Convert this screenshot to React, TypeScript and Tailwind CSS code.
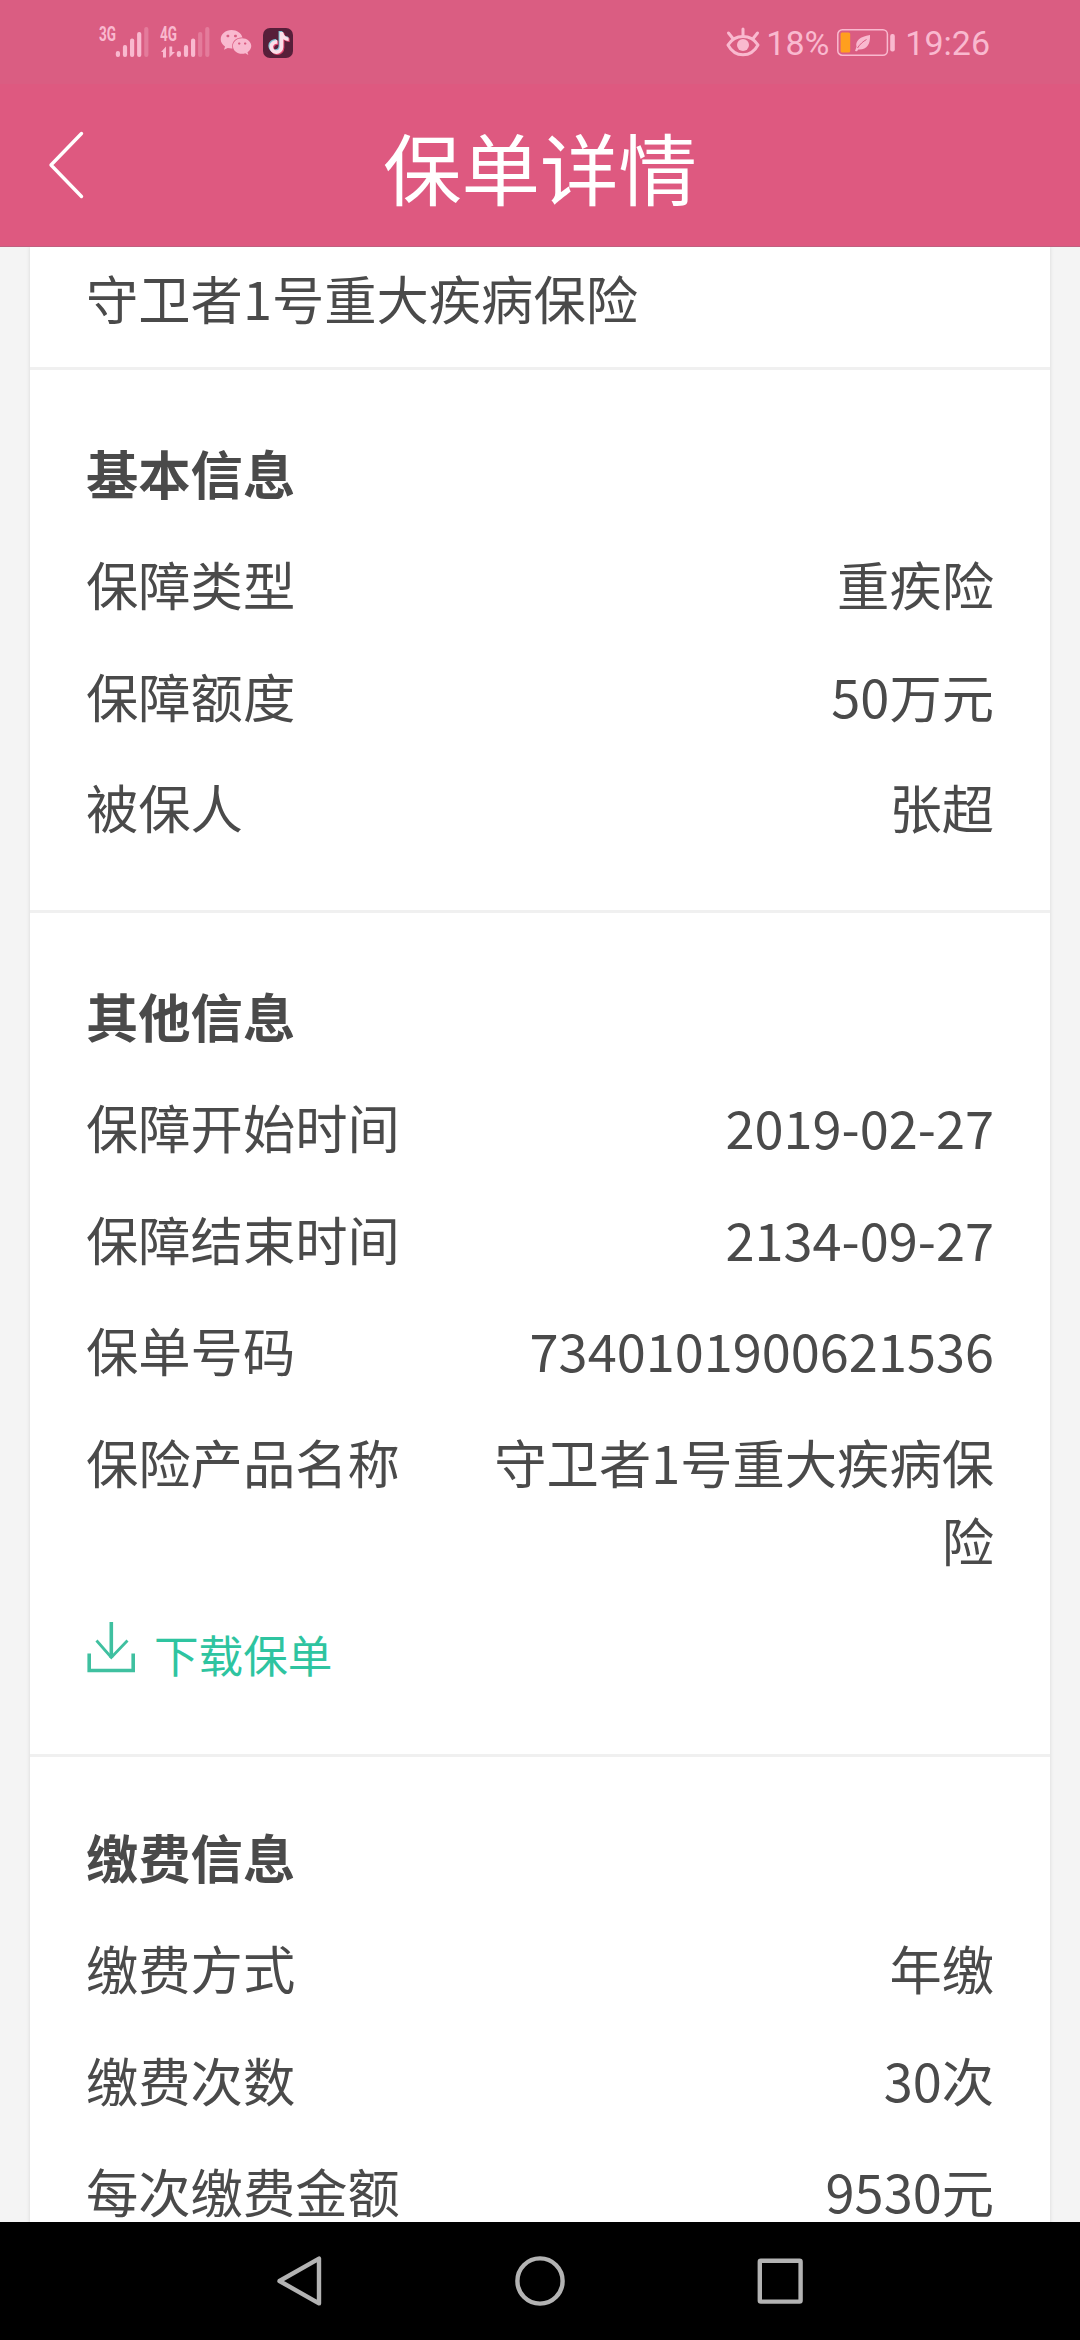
import React from "react";
import { FaWeixin, FaTiktok } from "react-icons/fa";

const BAR_TOPS = [51, 45, 38.5, 32, 27];

function Signal({ label, lit, data }: { label: string; lit: number; data?: boolean }) {
  return (
    <svg width="52" height="36" viewBox="0 0 52 36" className="shrink-0" fill="#f9b9cf">
      <text
        x="0"
        y="16.5"
        fontFamily="Roboto, sans-serif"
        fontWeight="700"
        fontSize="19.5"
        textLength="17"
        lengthAdjust="spacingAndGlyphs"
      >
        {label}
      </text>
      {data && (
        <g>
          <path d="M1 28 L6 22.5 V33.5 H3 V28 Z" />
          <path d="M15 28 L9.4 33.5 V22.5 H12.2 V28 Z" />
        </g>
      )}
      {BAR_TOPS.map((top, i) => (
        <rect
          key={top}
          x={16.8 + i * 7.1}
          y={top - 24}
          width="4.2"
          height={57 - top}
          rx="2"
          opacity={i < lit ? 1 : 0.33}
        />
      ))}
    </svg>
  );
}

function StatusBar() {
  return (
    <div className="flex h-[84px] shrink-0 items-start bg-[#da5d82] pt-6 pr-[91px] pl-[99px] text-[#f9b9cf]">
      <Signal label="3G" lit={4} />
      <div className="ml-[9px]">
        <Signal label="4G" lit={3} data />
      </div>
      <FaWeixin className="mt-[1px] ml-2 h-[35px] w-[32px] shrink-0" />
      <div className="relative mt-1 ml-[11px] h-[30px] w-[30px] shrink-0 rounded-[7px] bg-[#571f3a]">
        <FaTiktok className="absolute top-[3px] left-[4px] h-[22px] w-[22px] text-[#7fc3d3]" />
        <FaTiktok className="absolute top-[5px] left-[6px] h-[22px] w-[22px] text-[#e2476f]" />
        <FaTiktok className="absolute top-[4px] left-[5px] h-[22px] w-[22px] text-[#fbdfe9]" />
      </div>
      <div className="flex-1" />
      <svg width="34" height="30" viewBox="0 0 34 30" className="mt-[3px] shrink-0" fill="none" stroke="#f9b9cf" strokeWidth="3" strokeLinecap="round">
        <path d="M2 18 C9 6.5 25 6.5 32 18 C25 31 9 31 2 18 Z" strokeLinejoin="round" />
        <circle cx="17" cy="18" r="6" fill="#f9b9cf" stroke="none" />
        <path d="M17 2 V8 M2.5 6 L6.5 11 M31.5 6 L27.5 11" />
      </svg>
      <span className="ml-[6px] w-[71px] font-[Roboto,sans-serif] text-[34px] leading-[38px] whitespace-nowrap">18%</span>
      <svg width="59" height="28" viewBox="0 0 59 28" className="mt-[5px] shrink-0">
        <rect x="0.8" y="0.8" width="49.6" height="25.4" rx="4.5" fill="none" stroke="#f9b9cf" strokeWidth="1.5" />
        <rect x="3.6" y="3.4" width="9.6" height="20.2" rx="1.5" fill="#ff9f1e" />
        <path d="M33 6 C23 7.5 18 12 19.5 17.8 L18 22 L20 22.3 L21.3 20.5 C30 21 33.5 15 33 6 Z" fill="#f9b9cf" />
        <path d="M20.5 19 C23 15 26 12.5 29.5 10.5" stroke="#da5d82" strokeWidth="1" fill="none" />
        <rect x="53.2" y="5" width="4.6" height="17.5" rx="2" fill="#f9b9cf" />
      </svg>
      <span className="ml-[9px] -mr-px font-[Roboto,sans-serif] text-[34px] leading-[38px] whitespace-nowrap">19:26</span>
    </div>
  );
}

function Header() {
  return (
    <header className="relative flex h-[163px] shrink-0 items-center justify-center border-b border-[#c06080] bg-[#de5980] pt-[1px]">
      <svg width="40" height="70" viewBox="0 0 40 70" className="absolute top-[46px] left-[47px]" fill="none" stroke="#fff" strokeWidth="3.4" strokeLinecap="round" strokeLinejoin="round">
        <path d="M34.5 3.5 L4 35 L34.5 66.5" />
      </svg>
      <h1 className="text-[78.5px] leading-[110px] text-white">保单详情</h1>
    </header>
  );
}

function Row({ label, value }: { label: string; value: string }) {
  return (
    <div className="flex justify-between py-[16.75px]">
      <span>{label}</span>
      <span className="max-w-[512px] text-right break-all">{value}</span>
    </div>
  );
}

function Section({ title, rows, children }: { title: string; rows: string[][]; children?: React.ReactNode }) {
  return (
    <section className="border-b-[3px] border-[#f0f0f0] px-14 pt-[46px] pb-12 last:pt-[43px]">
      <h2 className="py-[16.75px] font-bold">{title}</h2>
      {rows.map(([label, value]) => (
        <Row key={label} label={label} value={value} />
      ))}
      {children}
    </section>
  );
}

function Download() {
  return (
    <div className="flex h-[111.5px] items-center pt-[8px] text-[#2ec4a0]">
      <svg width="50" height="54" viewBox="0 0 50 54" className="mb-[14px]" fill="none" stroke="#3fc0a0" strokeWidth="3.6">
        <path d="M3.2 33.5 V50.5 H47.2 V33.5" />
        <path d="M25.3 2 V38" />
        <path d="M10.5 20.5 L25.3 37.5 L41.5 20.5" strokeWidth="2.8" />
      </svg>
      <span className="ml-[18px] text-[44.6px]">下载保单</span>
    </div>
  );
}

function NavBar() {
  return (
    <nav className="flex h-[118px] shrink-0 items-center justify-center gap-[190px] bg-black">
      <svg width="50" height="50" viewBox="0 0 50 50" fill="none" stroke="#b3b3b3" strokeWidth="4.4" strokeLinejoin="round">
        <path d="M44 2.6 V47.4 L4.5 25 Z" />
      </svg>
      <svg width="50" height="50" viewBox="0 0 50 50" fill="none" stroke="#b3b3b3" strokeWidth="4.4">
        <circle cx="25" cy="25" r="22.6" />
      </svg>
      <svg width="50" height="50" viewBox="0 0 50 50" fill="none" stroke="#b3b3b3" strokeWidth="4.4" strokeLinejoin="round">
        <rect x="4.8" y="4.8" width="40.8" height="40.8" rx="1" />
      </svg>
    </nav>
  );
}

export default function App() {
  return (
    <div className="flex h-[2340px] w-[1080px] flex-col overflow-hidden bg-[#f4f4f4] font-['Noto_Sans_CJK_SC',sans-serif] text-[52.3px] leading-[78px] text-[#4a4a4a]">
      <StatusBar />
      <Header />
      <main className="min-h-0 flex-1 overflow-hidden px-[30px]">
        <div className="bg-white shadow-[0_0_4px_rgba(0,0,0,0.12)]">
          <div className="h-[123px] border-b-[3px] border-[#f0f0f0] px-14 pt-[11px]">守卫者1号重大疾病保险</div>
          <Section
            title="基本信息"
            rows={[
              ["保障类型", "重疾险"],
              ["保障额度", "50万元"],
              ["被保人", "张超"],
            ]}
          />
          <Section
            title="其他信息"
            rows={[
              ["保障开始时间", "2019-02-27"],
              ["保障结束时间", "2134-09-27"],
              ["保单号码", "7340101900621536"],
              ["保险产品名称", "守卫者1号重大疾病保险"],
            ]}
          >
            <Download />
          </Section>
          <Section
            title="缴费信息"
            rows={[
              ["缴费方式", "年缴"],
              ["缴费次数", "30次"],
              ["每次缴费金额", "9530元"],
            ]}
          />
        </div>
      </main>
      <NavBar />
    </div>
  );
}
